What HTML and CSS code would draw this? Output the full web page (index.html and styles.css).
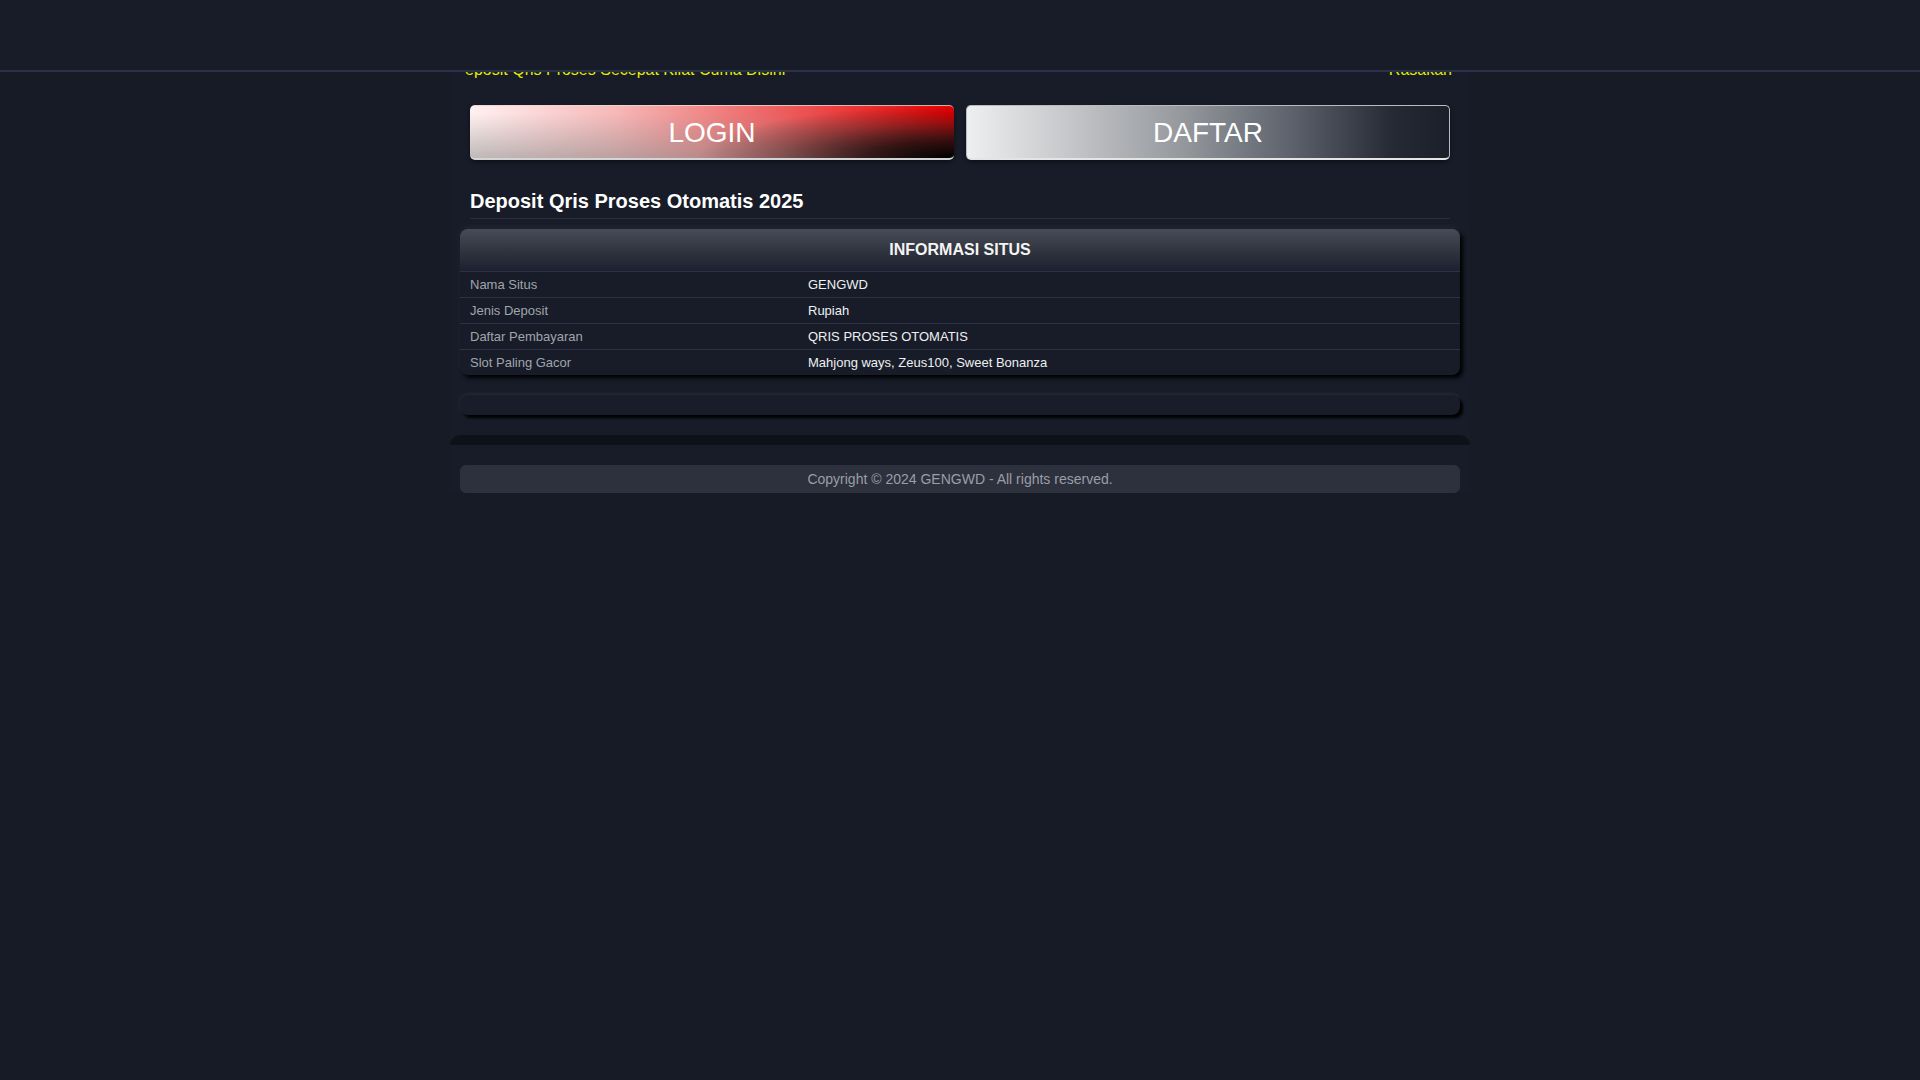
FILE: index.html
```html
<!DOCTYPE html>
<html lang="id">
<head>
<meta charset="utf-8">
<title>GENGWD - Deposit Qris Proses Otomatis 2025</title>
<link rel="stylesheet" href="styles.css">
</head>
<body>
<header class="topbar"></header>
<main class="wrap">
  <div class="ticker">
    <div class="ticker-line">
      <span class="t1">Deposit Qris Proses Secepat Kilat Cuma Disini</span>
      <span class="t2">Rasakan</span>
    </div>
  </div>
  <div class="actions">
    <a class="btn btn-login" href="#">LOGIN</a>
    <a class="btn btn-daftar" href="#">DAFTAR</a>
  </div>
  <h1 class="title">Deposit Qris Proses Otomatis 2025</h1>
  <section class="info">
    <div class="info-head">INFORMASI SITUS</div>
    <div class="info-row"><span class="k">Nama Situs</span><span class="v">GENGWD</span></div>
    <div class="info-row"><span class="k">Jenis Deposit</span><span class="v">Rupiah</span></div>
    <div class="info-row"><span class="k">Daftar Pembayaran</span><span class="v">QRIS PROSES OTOMATIS</span></div>
    <div class="info-row"><span class="k">Slot Paling Gacor</span><span class="v">Mahjong ways, Zeus100, Sweet Bonanza</span></div>
  </section>
  <div class="blank"></div>
  <div class="darkbar"></div>
  <footer class="foot">Copyright © 2024 GENGWD - All rights reserved.</footer>
</main>
</body>
</html>
```
FILE: styles.css
```css
* { box-sizing: border-box; }
html, body { margin: 0; padding: 0; }
body {
  background: #161b26;
  font-family: "Liberation Sans", Arial, sans-serif;
  color: #fff;
}
.topbar {
  height: 72px;
  background: #171c28;
  border-bottom: 2px solid #2a3246;
}
.wrap {
  width: 1020px;
  margin: 0 auto;
  background: #171c28;
  padding-bottom: 0;
}
.ticker {
  height: 10px;
  overflow: hidden;
  margin: 0 18px 0 14px;
}
.ticker-line {
  margin-top: -11px;
  display: flex;
  justify-content: space-between;
  font-size: 16px;
  line-height: 18px;
  color: #e3ee00;
  white-space: nowrap;
}
.t1 { margin-left: -10.5px; }
.actions {
  display: grid;
  grid-template-columns: 1fr 1fr;
  gap: 12px;
  margin: 23px 20px 0;
}
.btn {
  display: flex;
  align-items: center;
  justify-content: center;
  height: 55px;
  padding-top: 2px;
  border-radius: 5px;
  color: #fff;
  font-size: 28px;
  text-decoration: none;
  box-shadow: 0 2px 4px rgba(0,0,0,.45);
}
.btn-login {
  border-top: 1px solid rgba(255,220,220,.8);
  border-bottom: 2px solid #d4d4d4;
  background:
    radial-gradient(60% 115% at 100% 100%, rgba(0,0,0,1) 0%, rgba(0,0,0,.72) 30%, rgba(0,0,0,.3) 60%, rgba(0,0,0,0) 88%),
    linear-gradient(to bottom, rgba(150,150,150,0) 15%, rgba(140,140,140,.55) 100%),
    linear-gradient(to right, #fff0f0 0%, #f6b8b8 30%, #ee7676 55%, #ea0000 100%);
}
.btn-daftar {
  border: 1px solid #b9bbbf;
  border-bottom: 2px solid #e4e4e4;
  background: linear-gradient(to right, #eeeff0 0%, #c3c5c8 22%, #94979c 45%, #5b606a 68%, #262a35 88%, #1b1f2a 100%);
}
.title {
  margin: 30px 20px 0;
  padding-bottom: 5px;
  font-size: 20px;
  line-height: 23px;
  font-weight: bold;
  border-bottom: 1px solid #272e3d;
}
.info {
  margin: 10px 10px 0;
  border-radius: 8px;
  overflow: hidden;
  background: #171c28;
  box-shadow: 3px 3px 4px #000, 0 -2px 6px rgba(255,255,255,.05);
}
.info-head {
  height: 42px;
  display: flex;
  align-items: center;
  justify-content: center;
  font-size: 16px;
  font-weight: bold;
  color: #f4f4f4;
  background: linear-gradient(to bottom, #474c59 0%, #30353f 50%, #1c2130 100%);
}
.info-row {
  display: grid;
  grid-template-columns: 338px 1fr;
  height: 26px;
  align-items: center;
  padding-left: 10px;
  border-top: 1px solid #2a3244;
  font-size: 13px;
}
.k { color: #a1a5ac; }
.v { color: #eef0f2; }
.blank {
  margin: 20px 10px 0;
  height: 20px;
  border-radius: 8px;
  background: #181d29;
  box-shadow: 3px 3px 3px #000, 0 -1px 4px rgba(255,255,255,.08);
}
.darkbar {
  margin-top: 20px;
  height: 10px;
  border-radius: 10px 10px 0 0;
  background: #0e1118;
}
.foot {
  margin: 20px 10px 0;
  height: 28px;
  line-height: 28px;
  border-radius: 6px;
  background: #2c313d;
  text-align: center;
  font-size: 14px;
  color: #9a9ea6;
}
```
